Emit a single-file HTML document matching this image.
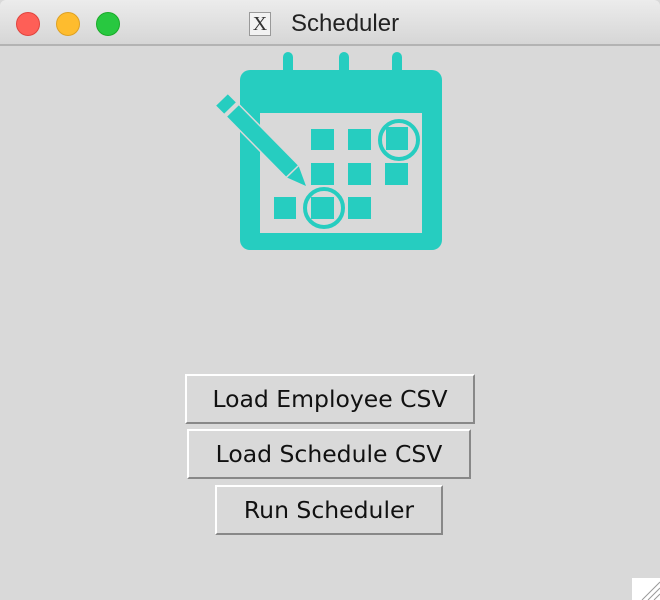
<!DOCTYPE html>
<html><head><style>
body{margin:0;width:660px;height:600px;background:#d9d9d9;overflow:hidden;position:relative;font-family:"DejaVu Sans",sans-serif}
.tb{position:absolute;left:0;top:0;width:660px;height:44px;background:linear-gradient(#ececec,#d6d6d6);border-bottom:2px solid #b3b3b3;border-radius:6px 6px 0 0}
.d{position:absolute;top:12px;width:24px;height:24px;border-radius:50%}
.t{position:absolute;left:291px;top:10px;font-family:"Liberation Sans",sans-serif;font-size:24px;color:#222}
.x{position:absolute;left:249px;top:12px;width:22px;height:24px;background:#f2f2f2;border:1px solid #999;box-sizing:border-box;font:20px "Liberation Serif",serif;text-align:center;line-height:22px;color:#333}
.b{position:absolute;height:50px;box-sizing:border-box;border:2px solid;border-color:#fff #888 #888 #fff;background:#d9d9d9;font-size:23.5px;color:#111;text-align:center;line-height:46px;white-space:nowrap}
</style></head><body>
<div class="tb"></div>
<div class="d" style="left:16px;background:#fe5f57;border:1px solid #e0443e;box-sizing:border-box"></div>
<div class="d" style="left:56px;background:#febc2e;border:1px solid #dea123;box-sizing:border-box"></div>
<div class="d" style="left:96px;background:#28c840;border:1px solid #1aab29;box-sizing:border-box"></div>
<div class="x">X</div>
<div class="t">Scheduler</div>
<svg style="position:absolute;left:0;top:0" width="660" height="300">
<g fill="#26cdc0">
<path fill-rule="evenodd" d="M250 70H432A10 10 0 0 1 442 80V240A10 10 0 0 1 432 250H250A10 10 0 0 1 240 240V80A10 10 0 0 1 250 70ZM260 113V233H422V113Z"/>
<rect x="283" y="52" width="10" height="38" rx="5"/>
<rect x="339" y="52" width="10" height="38" rx="5"/>
<rect x="392" y="52" width="10" height="38" rx="5"/>
<rect x="311" y="129" width="23" height="21"/><rect x="348" y="129" width="23" height="21"/><rect x="386" y="127" width="22" height="23"/>
<rect x="311" y="163" width="23" height="22"/><rect x="348" y="163" width="23" height="22"/><rect x="385" y="163" width="23" height="22"/>
<rect x="274" y="197" width="22" height="22"/><rect x="311" y="197" width="23" height="22"/><rect x="348" y="197" width="23" height="22"/>
</g>
<g fill="#26cdc0" stroke="#d9d9d9" stroke-width="3" paint-order="stroke" stroke-linejoin="round">
<polygon points="227.8,94.4 235.8,102.4 224.2,113.6 216.2,105.6"/>
<polygon points="238.8,105.4 298.8,166.4 287.2,177.6 227.2,116.6"/>
<polygon points="298.8,166.4 306,186 287.2,177.6"/>
</g>
<g fill="none" stroke="#26cdc0" stroke-width="4">
<circle cx="399" cy="140" r="19"/><circle cx="324" cy="208" r="19"/>
</g>
</svg>
<div class="b" style="left:185px;top:374px;width:290px">Load Employee CSV</div>
<div class="b" style="left:187px;top:429px;width:284px">Load Schedule CSV</div>
<div class="b" style="left:215px;top:485px;width:228px">Run Scheduler</div>
<svg style="position:absolute;right:0;bottom:0" width="28" height="22"><rect width="28" height="22" fill="#fff"/><path d="M10 22L28 4M16 22L28 10M22 22L28 16" stroke="#999"/></svg>
</body></html>
